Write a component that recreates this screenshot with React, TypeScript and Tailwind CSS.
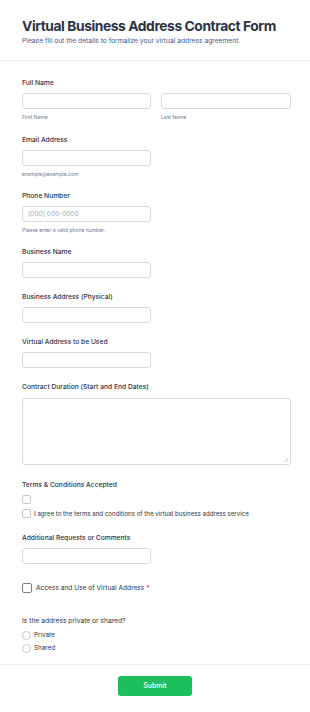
import React from 'react'

const labelCls = 'block text-[6.7px] leading-[10px] font-medium text-[#2c3345]'
const inputCls = 'block h-[16px] w-[129px] rounded-[3px] border border-[#d9dbe2] bg-white'
const hintCls = 'mt-[4px] block text-[5px] leading-[8px] text-[#6f7a93]'

function Field({ label, hint, placeholder }: { label: string; hint?: string; placeholder?: string }) {
  return (
    <div className={hint ? 'mb-[13px]' : 'mb-[14px]'}>
      <span className={labelCls}>{label}</span>
      <div className={`mt-[5px] ${inputCls} px-[5px] text-[6.5px] leading-[14px] text-[#a0a7b8]`}>{placeholder}</div>
      {hint && <span className={hintCls}>{hint}</span>}
    </div>
  )
}

export default function App() {
  return (
    <div className="min-h-[712px] bg-white font-['Inter',sans-serif]">
      <header className="px-[22px] pt-[17px] pb-[14px]">
        <h1 className="text-[13.8px] leading-[18px] font-bold tracking-[-0.03em] text-[#2c3345]">
          Virtual Business Address Contract Form
        </h1>
        <p className="mt-[1px] text-[6.7px] leading-[10px] text-[#3e5a8f]">
          Please fill out the details to formalize your virtual address agreement.
        </p>
      </header>
      <div className="h-px bg-[#eceef2]" />

      <div className="px-[22px] pt-[17px]">
        <div className="mb-[14px]">
          <span className={labelCls}>Full Name</span>
          <div className="mt-[5px] flex gap-[10px]">
            <div>
              <div className={inputCls} />
              <span className={hintCls}>First Name</span>
            </div>
            <div>
              <div className="block h-[16px] w-[130px] rounded-[3px] border border-[#d9dbe2] bg-white" />
              <span className={hintCls}>Last Name</span>
            </div>
          </div>
        </div>

        <Field label="Email Address" hint="example@example.com" />
        <Field label="Phone Number" hint="Please enter a valid phone number." placeholder="(000) 000-0000" />
        <Field label="Business Name" />
        <Field label="Business Address (Physical)" />
        <Field label="Virtual Address to be Used" />

        <div className="mb-[15px]">
          <span className={labelCls}>Contract Duration (Start and End Dates)</span>
          <div className="relative mt-[6px] h-[67px] w-[269px] rounded-[3px] border border-[#d9dbe2] bg-white">
            <svg className="absolute right-[2px] bottom-[2px]" width="4" height="4" viewBox="0 0 4 4">
              <path d="M4 0L0 4M4 2L2 4" stroke="#b5b9c4" strokeWidth="0.6" />
            </svg>
          </div>
        </div>

        <div className="mb-[15px]">
          <span className={labelCls}>Terms &amp; Conditions Accepted</span>
          <div className="mt-[5px] h-[9px] w-[9px] rounded-[2px] border border-[#c3c7d2]" />
          <div className="mt-[5px] flex items-center gap-[3px]">
            <div className="h-[9px] w-[9px] rounded-[2px] border border-[#c3c7d2]" />
            <span className="text-[6.15px] leading-[9px] text-[#2c3345]">
              I agree to the terms and conditions of the virtual business address service
            </span>
          </div>
        </div>

        <Field label="Additional Requests or Comments" />

        <div className="mt-[19px] flex items-center gap-[4px]">
          <div className="h-[10px] w-[10px] rounded-[2px] border border-[#7b8194]" />
          <span className="text-[6.6px] leading-[10px] text-[#2c3345]">
            Access and Use of Virtual Address <span className="text-[#e5322d]">*</span>
          </span>
        </div>

        <div className="mt-[23px] pb-[11px]">
          <span className="block text-[6.7px] leading-[10px] text-[#2c3345]">Is the address private or shared?</span>
          <div className="mt-[4px] flex items-center gap-[3px]">
            <div className="h-[9px] w-[9px] rounded-full border border-[#c3c7d2]" />
            <span className="text-[6.3px] leading-[10px] text-[#2c3345]">Private</span>
          </div>
          <div className="mt-[3px] flex items-center gap-[3px]">
            <div className="h-[9px] w-[9px] rounded-full border border-[#c3c7d2]" />
            <span className="text-[6.3px] leading-[10px] text-[#2c3345]">Shared</span>
          </div>
        </div>
      </div>

      <div className="h-px bg-[#eceef2]" />
      <div className="flex justify-center pt-[11px] pb-[17px]">
        <button className="h-[20px] w-[74px] rounded-[3px] bg-[#1dbf5c] text-[7px] font-medium text-white">
          Submit
        </button>
      </div>
    </div>
  )
}
